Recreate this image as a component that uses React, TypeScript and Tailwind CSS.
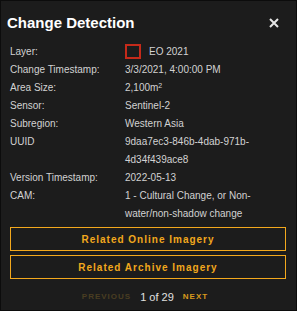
const ROWS: [string, React.ReactNode][] = [
  ["Change Timestamp:", "3/3/2021, 4:00:00 PM"],
  [
    "Area Size:",
    <>
      2,100m<sup className="text-[7px]">2</sup>
    </>,
  ],
  ["Sensor:", "Sentinel-2"],
  ["Subregion:", "Western Asia"],
  ["UUID", "9daa7ec3-846b-4dab-971b-4d34f439ace8"],
  ["Version Timestamp:", "2022-05-13"],
  ["CAM:", "1 - Cultural Change, or Non-water/non-shadow change"],
];

function Row({ label, children }: { label: string; children: React.ReactNode }) {
  return (
    <div className="flex text-[10px] leading-[18px] text-[#d2d2d2]">
      <div className="w-[115px] shrink-0">{label}</div>
      <div className="w-[162px]">{children}</div>
    </div>
  );
}

export default function App() {
  return (
    <div
      className="flex h-[311px] w-[297px] flex-col border border-[#0c0c0c] bg-[#1c1c1c]"
      style={{ fontFamily: '"Liberation Sans", Arial, sans-serif' }}
    >
      <div className="flex items-center justify-between pl-[6px] pr-[17px] pt-[12px]">
        <h1 className="text-[15px] font-bold leading-[20px] text-white">Change Detection</h1>
        <svg width="10" height="10" viewBox="0 0 10 10" className="text-[#e6e6e6]">
          <path d="M1 1L9 9M9 1L1 9" stroke="currentColor" strokeWidth="2" />
        </svg>
      </div>

      <div className="mt-[8px] pl-[9px] pr-[10px]">
        <div className="flex h-[20px] items-center text-[10px] text-[#d2d2d2]">
          <div className="w-[115px] shrink-0">Layer:</div>
          <span className="h-[15px] w-[16px] border-2 border-[#c52a1a]" />
          <span className="ml-[8px]">EO 2021</span>
        </div>
        {ROWS.map(([label, value]) => (
          <Row key={label} label={label}>
            {value}
          </Row>
        ))}

        <div className="mt-[4px] flex flex-col gap-[4px]">
          {["Related Online Imagery", "Related Archive Imagery"].map((t) => (
            <button
              key={t}
              className="h-[24px] w-full border border-[#f2a81d] text-[10px] font-bold tracking-[1px] text-[#f2a81d]"
            >
              {t}
            </button>
          ))}
        </div>

        <div className="mt-[10px] flex items-center justify-center gap-[9px] pr-[6px]">
          <span className="text-[8px] font-bold tracking-[1px] text-[#4a3e22]">PREVIOUS</span>
          <span className="text-[11px] text-[#e0e0e0]">1 of 29</span>
          <span className="text-[8px] font-bold tracking-[1px] text-[#d99a1c]">NEXT</span>
        </div>
      </div>
    </div>
  );
}
